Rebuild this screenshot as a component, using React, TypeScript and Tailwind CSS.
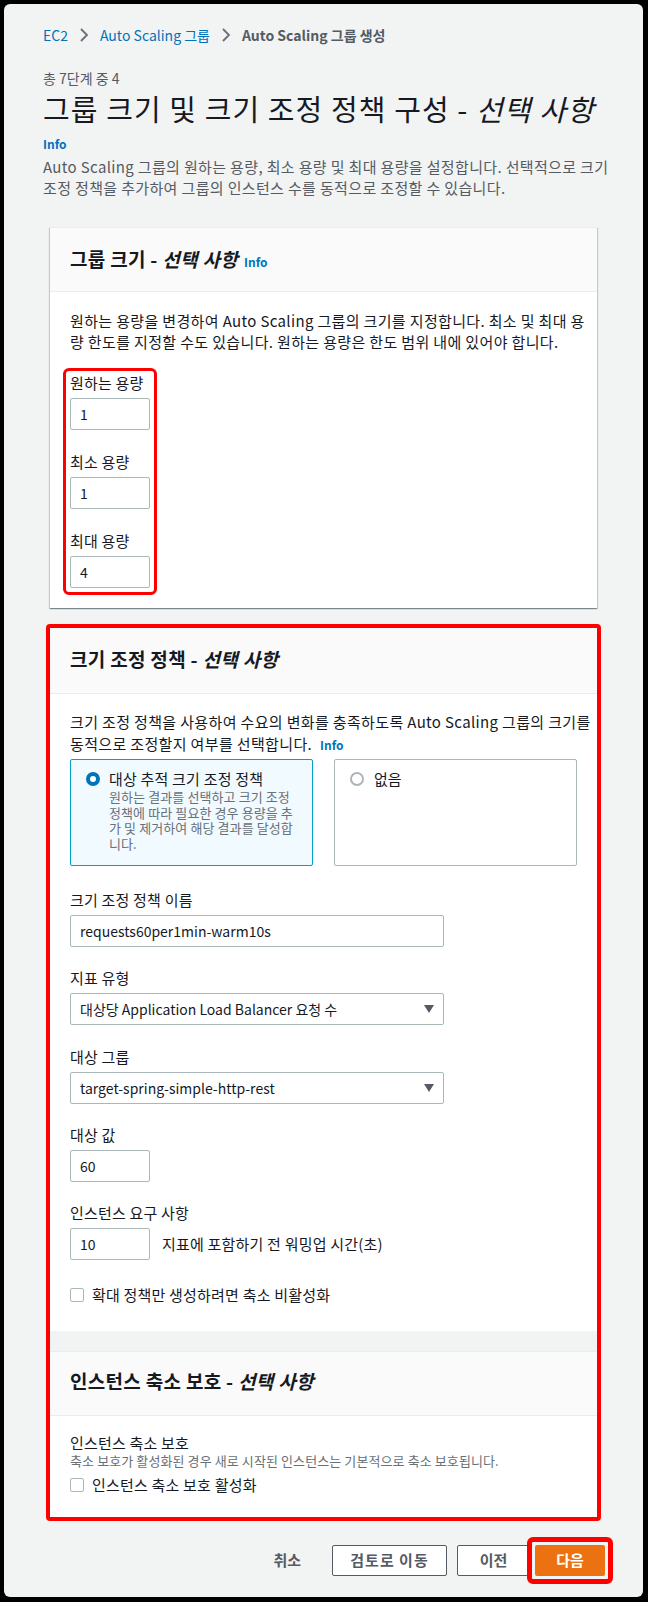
import React from "react";

const font = { fontFamily: '"Noto Sans CJK KR", "Noto Sans", sans-serif' };

const Chevron = () => (
  <svg width="10" height="16" viewBox="0 0 10 16" className="mx-[11px]">
    <polyline points="2,2 8,8 2,14" fill="none" stroke="#687078" strokeWidth="1.8" />
  </svg>
);

const Caret = () => (
  <svg width="12" height="10" viewBox="0 0 12 10">
    <polygon points="1,1 11,1 6,9" fill="#545b64" />
  </svg>
);

const TextInput = ({ value, wide }: { value: string; wide?: boolean }) => (
  <div
    className={`flex h-[32px] items-center rounded-[2px] border border-[#aab7b8] bg-white px-[9px] text-[14px] text-[#16191f] ${
      wide ? "w-[374px]" : "w-[80px]"
    }`}
  >
    {value}
  </div>
);

const Select = ({ value }: { value: string }) => (
  <div className="flex h-[32px] w-[374px] items-center justify-between rounded-[2px] border border-[#aab7b8] bg-white pl-[9px] pr-[8px] text-[14px] text-[#16191f]">
    <span>{value}</span>
    <Caret />
  </div>
);

const Field = ({ label, children, className = "" }: { label: string; children: React.ReactNode; className?: string }) => (
  <div className={className}>
    <div className="mb-[5px] text-[15px] leading-[20px] tracking-[0.2px] text-[#16191f]">{label}</div>
    {children}
  </div>
);

const Checkbox = ({ label }: { label: string }) => (
  <div className="flex h-[20px] items-center gap-[8px] text-[15px] tracking-[0.2px] text-[#16191f]">
    <span className="h-[14px] w-[14px] rounded-[2px] border border-[#aab7b8] bg-white" />
    <span>{label}</span>
  </div>
);

const Title = ({ text }: { text: string }) => (
  <h2 className="text-[19px] font-bold tracking-[0.3px] text-[#16191f]">
    {text} - <i>선택 사항</i>
  </h2>
);

export default function App() {
  return (
    <div style={font} className="h-[1602px] w-[648px] bg-black pb-[5px] pl-[4px] pr-[5px] pt-[4px]">
      <div className="h-full w-full rounded-[6px] bg-[#f2f3f3]">
        <div className="pl-[39px] pt-[20px]">
          {/* breadcrumb */}
          <nav className="flex h-[22px] items-center text-[14px]">
            <span className="text-[#0073bb]">EC2</span>
            <Chevron />
            <span className="text-[#0073bb]">Auto Scaling 그룹</span>
            <Chevron />
            <span className="font-semibold text-[#545b64]">Auto Scaling 그룹 생성</span>
          </nav>

          <div className="mt-[22px] text-[14px] leading-[20px] text-[#545b64]">총 7단계 중 4</div>
          <h1 className="text-[29px] leading-[40px] tracking-[1.1px] text-[#16191f]">
            그룹 크기 및 크기 조정 정책 구성 - <i>선택 사항</i>
          </h1>
          <div className="mt-[8px] text-[12px] font-bold leading-[16px] text-[#0073bb]">Info</div>
          <p className="mt-[4px] whitespace-nowrap text-[15px] leading-[21px] tracking-[0.35px] text-[#545b64]">
            Auto Scaling 그룹의 원하는 용량, 최소 용량 및 최대 용량을 설정합니다. 선택적으로 크기
            <br />
            조정 정책을 추가하여 그룹의 인스턴스 수를 동적으로 조정할 수 있습니다.
          </p>
        </div>

        {/* group size card */}
        <section className="ml-[46px] mt-[29px] w-[547px] border-t border-[#eaeded] bg-white shadow-[0_1px_1px_0_rgba(0,28,36,0.3),1px_1px_1px_0_rgba(0,28,36,0.15),-1px_1px_1px_0_rgba(0,28,36,0.15)]">
          <div className="flex h-[64px] items-center border-b border-[#eaeded] bg-[#fafafa] px-[20px]">
            <Title text="그룹 크기" />
            <span className="ml-[6px] mt-[4px] text-[12px] font-bold text-[#0073bb]">Info</span>
          </div>
          <div className="px-[20px] pb-[13px] pt-[18px]">
            <p className="whitespace-nowrap text-[15px] leading-[21px] tracking-[0.35px] text-[#16191f]">
              원하는 용량을 변경하여 Auto Scaling 그룹의 크기를 지정합니다. 최소 및 최대 용
              <br />
              량 한도를 지정할 수도 있습니다. 원하는 용량은 한도 범위 내에 있어야 합니다.
            </p>
            <div className="-ml-[7px] mt-[16px] w-[94px] rounded-[6px] border-[3px] border-[#ff0000] px-[4px] pb-[4px] pt-[2px]">
              <Field label="원하는 용량">
                <TextInput value="1" />
              </Field>
              <Field label="최소 용량" className="mt-[22px]">
                <TextInput value="1" />
              </Field>
              <Field label="최대 용량" className="mt-[22px]">
                <TextInput value="4" />
              </Field>
            </div>
          </div>
        </section>

        {/* red highlighted group */}
        <div className="ml-[42px] mt-[16px] w-[555px] rounded-[4px] border-[4px] border-[#ff0000]">
          <section className="bg-white shadow-[0_1px_1px_0_rgba(0,28,36,0.3)]">
            <div className="flex h-[66px] items-center border-b border-[#eaeded] bg-[#fafafa] px-[20px] pb-[3px]">
              <Title text="크기 조정 정책" />
            </div>
            <div className="px-[20px] pb-[26px] pt-[17px]">
              <p className="whitespace-nowrap text-[15px] leading-[22px] tracking-[0.35px] text-[#16191f]">
                크기 조정 정책을 사용하여 수요의 변화를 충족하도록 Auto Scaling 그룹의 크기를
                <br />
                동적으로 조정할지 여부를 선택합니다.
                <span className="ml-[8px] text-[12px] font-bold tracking-normal text-[#0073bb]">Info</span>
              </p>
              <div className="mt-[3px] grid grid-cols-2 gap-[21px]">
                <div className="h-[107px] rounded-[2px] border border-[#00a1c9] bg-[#f1faff] pl-[15px] pt-[9px]">
                  <div className="flex items-start gap-[9px]">
                    <span className="mt-[3px] h-[14px] w-[14px] shrink-0 rounded-full border-[4px] border-[#0073bb] bg-white" />
                    <div>
                      <div className="text-[15px] leading-[20px] tracking-[0.2px] text-[#16191f]">대상 추적 크기 조정 정책</div>
                      <div className="whitespace-nowrap text-[13px] leading-[15.5px] tracking-[0.1px] text-[#687078]">
                        원하는 결과를 선택하고 크기 조정
                        <br />
                        정책에 따라 필요한 경우 용량을 추
                        <br />
                        가 및 제거하여 해당 결과를 달성합
                        <br />
                        니다.
                      </div>
                    </div>
                  </div>
                </div>
                <div className="h-[107px] rounded-[2px] border border-[#aab7b8] bg-white pl-[15px] pt-[9px]">
                  <div className="flex h-[20px] items-center gap-[10px]">
                    <span className="h-[14px] w-[14px] rounded-full border-[2px] border-[#aab7b8] bg-white" />
                    <span className="text-[15px] leading-[20px] text-[#16191f]">없음</span>
                  </div>
                </div>
              </div>

              <Field label="크기 조정 정책 이름" className="mt-[24px]">
                <TextInput value="requests60per1min-warm10s" wide />
              </Field>
              <Field label="지표 유형" className="mt-[21px]">
                <Select value="대상당 Application Load Balancer 요청 수" />
              </Field>
              <Field label="대상 그룹" className="mt-[22px]">
                <Select value="target-spring-simple-http-rest" />
              </Field>
              <Field label="대상 값" className="mt-[21px]">
                <TextInput value="60" />
              </Field>
              <Field label="인스턴스 요구 사항" className="mt-[21px]">
                <div className="flex items-center gap-[12px]">
                  <TextInput value="10" />
                  <span className="text-[15px] tracking-[0.2px] text-[#16191f]">지표에 포함하기 전 워밍업 시간(초)</span>
                </div>
              </Field>
              <div className="mt-[25px]">
                <Checkbox label="확대 정책만 생성하려면 축소 비활성화" />
              </div>
            </div>
          </section>

          <div className="h-[20px] bg-[#f2f3f3]" />

          <section className="border-t border-[#eaeded] bg-white">
            <div className="flex h-[64px] items-center border-b border-[#eaeded] bg-[#fafafa] px-[20px] pb-[5px]">
              <Title text="인스턴스 축소 보호" />
            </div>
            <div className="px-[20px] pb-[22px] pt-[17px]">
              <div className="text-[15px] leading-[20px] tracking-[0.2px] text-[#16191f]">인스턴스 축소 보호</div>
              <div className="text-[13px] leading-[16px] tracking-[0.1px] text-[#687078]">
                축소 보호가 활성화된 경우 새로 시작된 인스턴스는 기본적으로 축소 보호됩니다.
              </div>
              <div className="mt-[6px]">
                <Checkbox label="인스턴스 축소 보호 활성화" />
              </div>
            </div>
          </section>
        </div>

        {/* footer actions */}
        <div className="mt-[16px] flex items-center justify-end pr-[30px] text-[15px] font-bold">
          <span className="mr-[31px] text-[#545b64]">취소</span>
          <button className="h-[31px] w-[115px] rounded-[2px] border border-[#545b64] bg-white tracking-[1px] text-[#545b64]">
            검토로 이동
          </button>
          <button className="ml-[10px] h-[31px] w-[73px] rounded-[2px] border border-[#545b64] bg-white text-[#545b64]">
            이전
          </button>
          <div className="-ml-[3px] rounded-[6px] border-[5px] border-[#ff0000] p-[3px]">
            <button className="block h-[31px] w-[70px] rounded-[2px] bg-[#ec7211] text-white">다음</button>
          </div>
        </div>
      </div>
    </div>
  );
}
